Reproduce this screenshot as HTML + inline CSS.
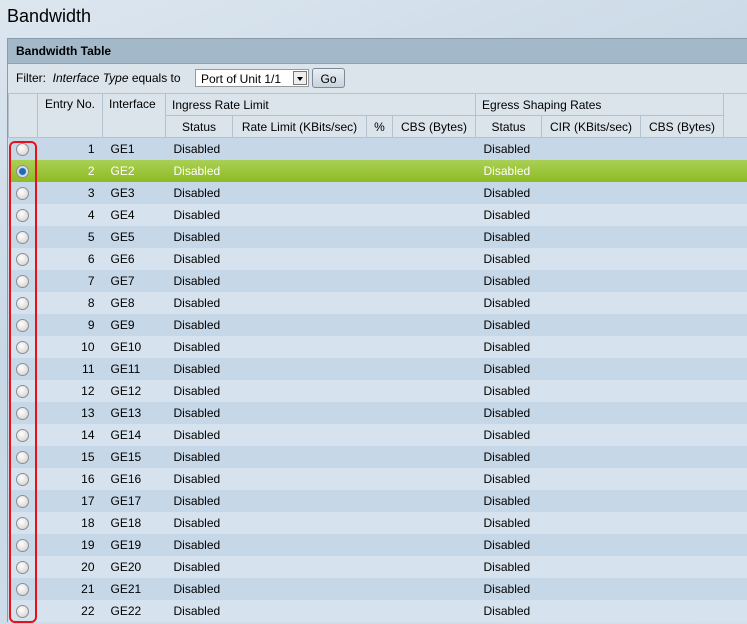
<!DOCTYPE html>
<html><head><style>
body{margin:0;width:747px;height:624px;overflow:hidden;background:linear-gradient(160deg,#dce6ef 0%,#c9d8e6 40%,#d3dfea 100%);font-family:"Liberation Sans",Arial,sans-serif;font-size:12px;color:#000;position:relative}
h1{position:absolute;left:7px;top:6px;margin:0;font-size:18px;font-weight:normal}
.box{position:absolute;left:7px;top:38px;width:745px;border-left:1px solid #8a9cac;border-top:1px solid #8a9cac}
.tbar{height:24px;background:#a3b8c8;border-bottom:1px solid #8ea3b3;font-weight:bold;line-height:24px;padding-left:8px;font-size:12px}
.filter{height:29px;background:#dbe3eb;line-height:29px;padding-left:8px;position:relative}
.sel{position:absolute;left:187px;top:5px;width:114px;height:18px;background:#fff;border:1px solid #999;line-height:18px;box-sizing:border-box;padding-left:5px}
.sel i{position:absolute;right:1px;top:1px;width:14px;height:14px;border:1px solid #777;background:#eee;box-sizing:border-box}
.sel i:after{content:"";position:absolute;left:3px;top:5px;border:3px solid transparent;border-top:4px solid #000}
.go{position:absolute;left:304px;top:4px;width:33px;height:20px;border:1px solid #7a8a99;border-radius:3px;background:linear-gradient(#e8eef3,#c8d3dd);line-height:20px;text-align:center;box-sizing:border-box}
table{border-collapse:collapse;table-layout:fixed;width:740px}
td,th{padding:0;white-space:nowrap;overflow:hidden}
td{height:22px}
th{height:21px;background:#dbe3eb;font-weight:normal;border:1px solid #b4c2cf;text-align:left;padding-left:6px}
th.c{text-align:center;padding:0}
tr.o td{background:#c6d7e7}
tr.e td{background:#d6e2ee}
tr.g td{background:linear-gradient(#aacf55,#8fbb24);color:#fff}
td.n{text-align:right;padding-right:8px}
td.t{padding-left:8px}
.r{display:block;width:11px;height:11px;border-radius:50%;border:1px solid #8d8d8d;background:radial-gradient(circle at 40% 35%,#fff,#ccc);margin-left:7px}
.r.s{background:radial-gradient(circle,#1a6eb0 0 3px,#dde 4px)}
.red{position:absolute;left:9px;top:141px;width:24px;height:478px;border:2px solid #e8101a;border-radius:6px}
</style></head><body>
<h1>Bandwidth</h1>
<div class="box">
<div class="tbar">Bandwidth Table</div>
<div class="filter">Filter: &nbsp;<i>Interface Type</i> equals to<div class="sel">Port of Unit 1/1<i></i></div><div class="go">Go</div></div>
<table>
<colgroup><col style="width:29px"><col style="width:65px"><col style="width:63px"><col style="width:67px"><col style="width:134px"><col style="width:26px"><col style="width:83px"><col style="width:66px"><col style="width:99px"><col style="width:83px"><col style="width:25px"></colgroup>
<tr><th rowspan="2"></th><th rowspan="2" class="c" style="vertical-align:top;padding-top:3px">Entry No.</th><th rowspan="2" style="vertical-align:top;padding-top:3px">Interface</th><th colspan="4">Ingress Rate Limit</th><th colspan="3">Egress Shaping Rates</th><th rowspan="2"></th></tr>
<tr><th class="c">Status</th><th class="c">Rate Limit (KBits/sec)</th><th class="c">%</th><th class="c">CBS (Bytes)</th><th class="c">Status</th><th class="c">CIR (KBits/sec)</th><th class="c">CBS (Bytes)</th></tr>
<tr class="o"><td><span class="r"></span></td><td class="n">1</td><td class="t">GE1</td><td class="t">Disabled</td><td></td><td></td><td></td><td class="t">Disabled</td><td></td><td></td><td></td></tr>
<tr class="g"><td><span class="r s"></span></td><td class="n">2</td><td class="t">GE2</td><td class="t">Disabled</td><td></td><td></td><td></td><td class="t">Disabled</td><td></td><td></td><td></td></tr>
<tr class="o"><td><span class="r"></span></td><td class="n">3</td><td class="t">GE3</td><td class="t">Disabled</td><td></td><td></td><td></td><td class="t">Disabled</td><td></td><td></td><td></td></tr>
<tr class="e"><td><span class="r"></span></td><td class="n">4</td><td class="t">GE4</td><td class="t">Disabled</td><td></td><td></td><td></td><td class="t">Disabled</td><td></td><td></td><td></td></tr>
<tr class="o"><td><span class="r"></span></td><td class="n">5</td><td class="t">GE5</td><td class="t">Disabled</td><td></td><td></td><td></td><td class="t">Disabled</td><td></td><td></td><td></td></tr>
<tr class="e"><td><span class="r"></span></td><td class="n">6</td><td class="t">GE6</td><td class="t">Disabled</td><td></td><td></td><td></td><td class="t">Disabled</td><td></td><td></td><td></td></tr>
<tr class="o"><td><span class="r"></span></td><td class="n">7</td><td class="t">GE7</td><td class="t">Disabled</td><td></td><td></td><td></td><td class="t">Disabled</td><td></td><td></td><td></td></tr>
<tr class="e"><td><span class="r"></span></td><td class="n">8</td><td class="t">GE8</td><td class="t">Disabled</td><td></td><td></td><td></td><td class="t">Disabled</td><td></td><td></td><td></td></tr>
<tr class="o"><td><span class="r"></span></td><td class="n">9</td><td class="t">GE9</td><td class="t">Disabled</td><td></td><td></td><td></td><td class="t">Disabled</td><td></td><td></td><td></td></tr>
<tr class="e"><td><span class="r"></span></td><td class="n">10</td><td class="t">GE10</td><td class="t">Disabled</td><td></td><td></td><td></td><td class="t">Disabled</td><td></td><td></td><td></td></tr>
<tr class="o"><td><span class="r"></span></td><td class="n">11</td><td class="t">GE11</td><td class="t">Disabled</td><td></td><td></td><td></td><td class="t">Disabled</td><td></td><td></td><td></td></tr>
<tr class="e"><td><span class="r"></span></td><td class="n">12</td><td class="t">GE12</td><td class="t">Disabled</td><td></td><td></td><td></td><td class="t">Disabled</td><td></td><td></td><td></td></tr>
<tr class="o"><td><span class="r"></span></td><td class="n">13</td><td class="t">GE13</td><td class="t">Disabled</td><td></td><td></td><td></td><td class="t">Disabled</td><td></td><td></td><td></td></tr>
<tr class="e"><td><span class="r"></span></td><td class="n">14</td><td class="t">GE14</td><td class="t">Disabled</td><td></td><td></td><td></td><td class="t">Disabled</td><td></td><td></td><td></td></tr>
<tr class="o"><td><span class="r"></span></td><td class="n">15</td><td class="t">GE15</td><td class="t">Disabled</td><td></td><td></td><td></td><td class="t">Disabled</td><td></td><td></td><td></td></tr>
<tr class="e"><td><span class="r"></span></td><td class="n">16</td><td class="t">GE16</td><td class="t">Disabled</td><td></td><td></td><td></td><td class="t">Disabled</td><td></td><td></td><td></td></tr>
<tr class="o"><td><span class="r"></span></td><td class="n">17</td><td class="t">GE17</td><td class="t">Disabled</td><td></td><td></td><td></td><td class="t">Disabled</td><td></td><td></td><td></td></tr>
<tr class="e"><td><span class="r"></span></td><td class="n">18</td><td class="t">GE18</td><td class="t">Disabled</td><td></td><td></td><td></td><td class="t">Disabled</td><td></td><td></td><td></td></tr>
<tr class="o"><td><span class="r"></span></td><td class="n">19</td><td class="t">GE19</td><td class="t">Disabled</td><td></td><td></td><td></td><td class="t">Disabled</td><td></td><td></td><td></td></tr>
<tr class="e"><td><span class="r"></span></td><td class="n">20</td><td class="t">GE20</td><td class="t">Disabled</td><td></td><td></td><td></td><td class="t">Disabled</td><td></td><td></td><td></td></tr>
<tr class="o"><td><span class="r"></span></td><td class="n">21</td><td class="t">GE21</td><td class="t">Disabled</td><td></td><td></td><td></td><td class="t">Disabled</td><td></td><td></td><td></td></tr>
<tr class="e"><td><span class="r"></span></td><td class="n">22</td><td class="t">GE22</td><td class="t">Disabled</td><td></td><td></td><td></td><td class="t">Disabled</td><td></td><td></td><td></td></tr>
</table>
</div>
<div class="red"></div>
</body></html>
